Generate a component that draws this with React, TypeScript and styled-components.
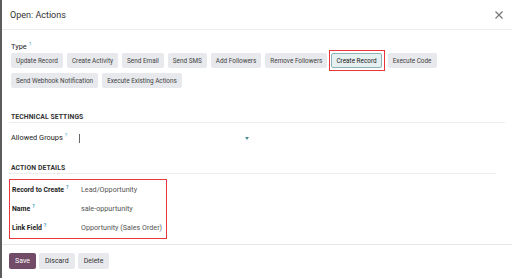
import styled, { createGlobalStyle } from "styled-components";

const Global = createGlobalStyle`
  html, body { margin: 0; padding: 0; background: #fff; }
  body { font-family: Roboto, "Noto Sans", sans-serif; color: #222; }
`;

const Dialog = styled.div`
  width: 512px;
  height: 278px;
  box-sizing: border-box;
  border-left: 2px solid #5c5c5c;
  background: #fff;
  display: flex;
  flex-direction: column;
`;

const Header = styled.div`
  height: 30px;
  box-sizing: border-box;
  border-bottom: 1px solid #ececec;
  display: flex;
  align-items: center;
  justify-content: space-between;
  padding: 0 9px 0 8px;
`;

const Title = styled.div`
  font-size: 9px;
  color: #333;
`;

const Close = styled.svg`
  width: 8px;
  height: 8px;
  stroke: #777;
  stroke-width: 1.2;
`;

const Body = styled.div`
  flex: 1;
  padding: 12px 7px 0 7px;
  display: flex;
  flex-direction: column;
`;

const Label = styled.div<{ bold?: boolean }>`
  font-size: ${(p) => (p.bold ? "6.9px" : "7.4px")};
  line-height: 10px;
  color: #222;
  font-weight: ${(p) => (p.bold ? 700 : 400)};
  white-space: nowrap;
`;

const Help = styled.sup`
  color: #3d9bc6;
  font-size: 5px;
  line-height: 0;
  margin-left: 2px;
  vertical-align: 3px;
`;

const ButtonWrap = styled.div`
  display: flex;
  flex-wrap: wrap;
  gap: 5px 4px;
  margin-top: 1px;
  padding-left: 2px;
  align-items: center;
`;

const Highlight = styled.div`
  border: 1px solid #e8383d;
  padding: 2px 2px 2px 1px;
  margin: -3px -1px -3px -2px;
  display: flex;
`;

const TypeBtn = styled.div<{ active?: boolean }>`
  height: 15px;
  box-sizing: border-box;
  padding: 0 4px;
  display: flex;
  align-items: center;
  font-size: 6.4px;
  white-space: nowrap;
  color: ${(p) => (p.active ? "#222" : "#444")};
  background: ${(p) => (p.active ? "#e6f0f1" : "#e7e9ed")};
  border: 1px solid ${(p) => (p.active ? "#8db3b8" : "#e7e9ed")};
  border-radius: 2px;
`;

const SectionTitle = styled.div`
  font-size: 6.8px;
  line-height: 8px;
  font-weight: 700;
  color: #333;
  letter-spacing: 0.1px;
  padding: 0 2px 1px 2px;
  border-bottom: 1px solid #ececec;
`;

const GroupRow = styled.div`
  display: flex;
  align-items: center;
  padding: 10px 2px 0 2px;
  height: 10px;
`;

const Field = styled.div`
  margin-left: 12px;
  width: 170px;
  height: 10px;
  display: flex;
  align-items: center;
  justify-content: space-between;
`;

const Cursor = styled.div`
  width: 1px;
  height: 9px;
  background: #666;
`;

const Caret = styled.div`
  width: 0;
  height: 0;
  border-left: 2.5px solid transparent;
  border-right: 2.5px solid transparent;
  border-top: 3px solid #4b8f99;
`;

const DetailBox = styled.div`
  margin: 5px 0 0 0;
  width: 158px;
  height: 60px;
  box-sizing: border-box;
  border: 1px solid #e8383d;
  padding: 0 2px;
  display: grid;
  grid-template-columns: 69px 1fr;
  grid-auto-rows: 19px;
  align-items: center;
`;

const Value = styled.div`
  font-size: 7.2px;
  color: #555;
  white-space: nowrap;
`;

const Footer = styled.div`
  height: 34px;
  box-sizing: border-box;
  border-top: 1px solid #e6e6e6;
  display: flex;
  align-items: flex-start;
  gap: 3px;
  padding: 8px 7px 0 7px;
`;

const ActionBtn = styled.div<{ primary?: boolean }>`
  height: 16px;
  box-sizing: border-box;
  padding: 0 6px;
  display: flex;
  align-items: center;
  font-size: 7px;
  color: ${(p) => (p.primary ? "#fff" : "#333")};
  background: ${(p) => (p.primary ? "#714b67" : "#e7e9ed")};
  border-radius: 2px;
`;

const Spacer = styled.div<{ h: number }>`
  height: ${(p) => p.h}px;
  flex-shrink: 0;
`;

const row1 = [
  "Update Record",
  "Create Activity",
  "Send Email",
  "Send SMS",
  "Add Followers",
  "Remove Followers",
];

export default function App() {
  return (
    <>
      <Global />
      <Dialog>
        <Header>
          <Title>Open: Actions</Title>
          <Close viewBox="0 0 8 8">
            <path d="M0.5 0.5 L7.5 7.5 M7.5 0.5 L0.5 7.5" />
          </Close>
        </Header>
        <Body>
          <Label style={{ paddingLeft: 2 }}>
            Type<Help>?</Help>
          </Label>
          <ButtonWrap>
            {row1.map((b) => (
              <TypeBtn key={b}>{b}</TypeBtn>
            ))}
            <Highlight>
              <TypeBtn active>Create Record</TypeBtn>
            </Highlight>
            <TypeBtn>Execute Code</TypeBtn>
            <TypeBtn>Send Webhook Notification</TypeBtn>
            <TypeBtn>Execute Existing Actions</TypeBtn>
          </ButtonWrap>
          <Spacer h={25} />
          <SectionTitle>TECHNICAL SETTINGS</SectionTitle>
          <GroupRow>
            <Label>
              Allowed Groups<Help>?</Help>
            </Label>
            <Field>
              <Cursor />
              <Caret />
            </Field>
          </GroupRow>
          <Spacer h={21} />
          <SectionTitle style={{ marginRight: 9 }}>ACTION DETAILS</SectionTitle>
          <DetailBox>
            <Label bold>
              Record to Create<Help>?</Help>
            </Label>
            <Value>Lead/Opportunity</Value>
            <Label bold>
              Name<Help>?</Help>
            </Label>
            <Value>sale-oppurtunity</Value>
            <Label bold>
              Link Field<Help>?</Help>
            </Label>
            <Value>Opportunity (Sales Order)</Value>
          </DetailBox>
        </Body>
        <Footer>
          <ActionBtn primary>Save</ActionBtn>
          <ActionBtn>Discard</ActionBtn>
          <ActionBtn>Delete</ActionBtn>
        </Footer>
      </Dialog>
    </>
  );
}
